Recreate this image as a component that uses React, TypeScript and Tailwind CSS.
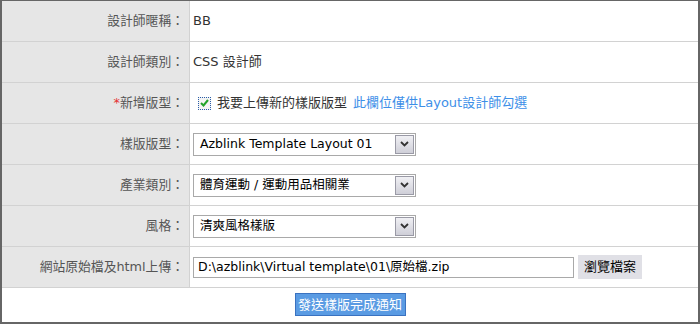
const FONT = '"DejaVu Sans", Tahoma, "Noto Sans CJK TC", sans-serif';

type Row = { label: React.ReactNode; value: React.ReactNode };

function FakeSelect({ text }: { text: string }) {
  return (
    <div className="flex h-[23px] w-[223px] items-center justify-between border border-[#a9a9a9] bg-white pl-[6px] pr-[1px]">
      <span className="text-[12.5px] text-black leading-none whitespace-nowrap">{text}</span>
      <div className="flex h-[19px] w-[19px] items-center justify-center border border-[#9a9aa6] bg-gradient-to-b from-[#f0f0f4] to-[#cfcfd8]">
        <svg width="9" height="6" viewBox="0 0 9 6" aria-hidden>
          <path d="M1 1 L4.5 4.5 L8 1" fill="none" stroke="#333" strokeWidth="1.8" />
        </svg>
      </div>
    </div>
  );
}

function CheckBox() {
  return (
    <div className="flex h-[13px] w-[13px] items-center justify-center border border-dotted border-[#2a5da8] bg-[#f4f4f4]">
      <svg width="9" height="8" viewBox="0 0 9 8" aria-hidden>
        <path d="M1 4 L3.5 6.5 L8 1" fill="none" stroke="#22a32a" strokeWidth="2" />
      </svg>
    </div>
  );
}

const ROWS: Row[] = [
  { label: "設計師暱稱：", value: <span className="text-[#333]">BB</span> },
  { label: "設計師類別：", value: <span className="text-[#333]">CSS 設計師</span> },
  {
    label: (
      <>
        <span className="text-[#e53333]">*</span>新增版型：
      </>
    ),
    value: (
      <div className="flex items-center pl-[5px]">
        <CheckBox />
        <span className="ml-[6px] text-[#333]">我要上傳新的樣版版型</span>
        <span className="ml-[6px] text-[#3d8fe8]">此欄位僅供Layout設計師勾選</span>
      </div>
    ),
  },
  { label: "樣版版型：", value: <FakeSelect text="Azblink Template Layout 01" /> },
  { label: "產業類別：", value: <FakeSelect text="體育運動 / 運動用品相關業" /> },
  { label: "風格：", value: <FakeSelect text="清爽風格樣版" /> },
  {
    label: "網站原始檔及html上傳：",
    value: (
      <div className="flex items-center">
        <div className="flex h-[21px] w-[381px] items-center border border-[#a9a9a9] bg-white pl-[4px] text-[12.5px] text-black whitespace-nowrap">
          D:\azblink\Virtual template\01\原始檔.zip
        </div>
        <div className="ml-[4px] flex h-[24px] w-[64px] items-center justify-center bg-[#e0e0e6] text-[13px] text-black">
          瀏覽檔案
        </div>
      </div>
    ),
  },
];

export default function App() {
  return (
    <div className="h-[324px] w-[700px] bg-white" style={{ fontFamily: FONT }}>
      <div className="flex h-full flex-col border-2 border-t border-[#666] text-[13px]">
        {ROWS.map((r, i) => (
          <div key={i} className="flex h-[41px] border-b border-[#d2d2d2]">
            <div className="flex w-[188px] items-center justify-end border-r border-[#d2d2d2] bg-[#e6e6e6] pr-[5px] text-[12.8px] text-[#555] whitespace-nowrap">
              {r.label}
            </div>
            <div className="flex flex-1 items-center pl-[3px]">{r.value}</div>
          </div>
        ))}
        <div className="flex flex-1 items-center justify-center pb-[1px]">
          <button className="h-[23px] w-[111px] border border-[#3a72c0] bg-[#5a9be3] text-[13px] text-white">
            發送樣版完成通知
          </button>
        </div>
      </div>
    </div>
  );
}
